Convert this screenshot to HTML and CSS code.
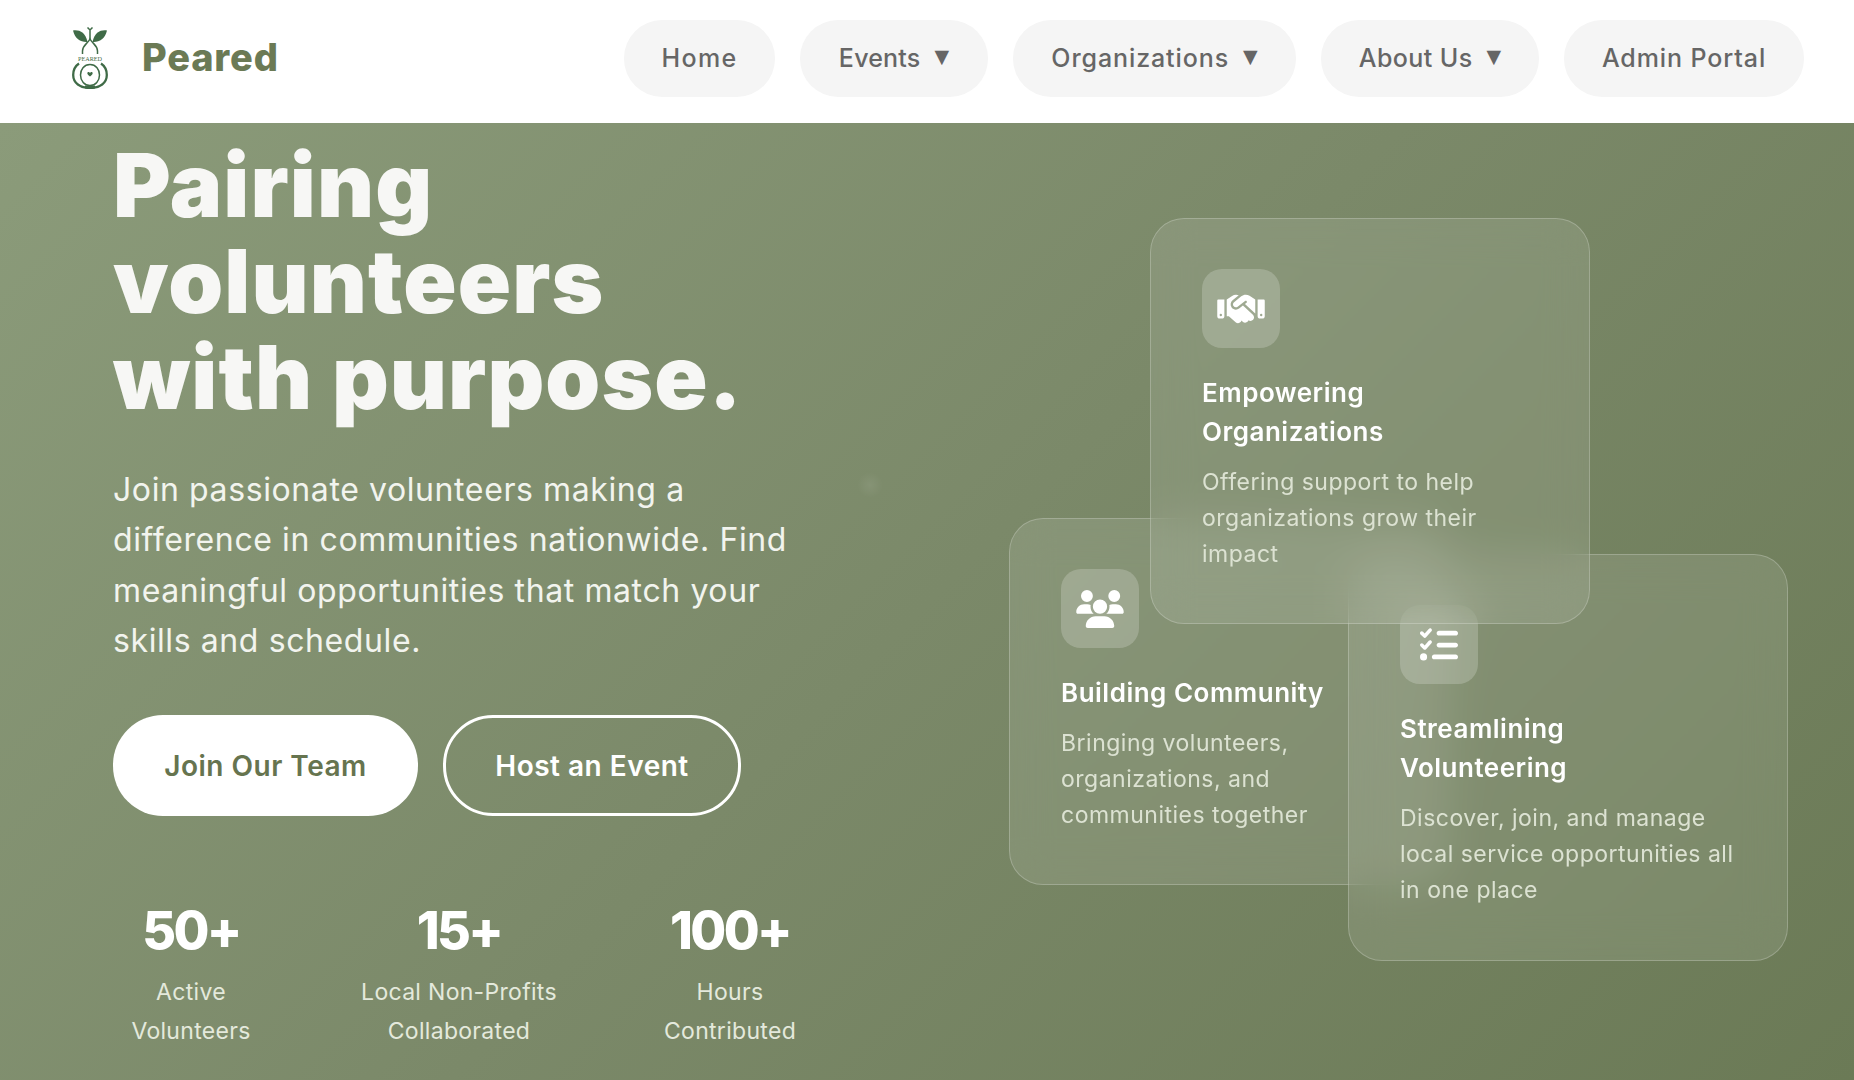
FILE: index.html
```html
<!DOCTYPE html>
<html lang="en">
<head>
<meta charset="utf-8">
<title>Peared</title>
<link rel="stylesheet" href="styles.css">
</head>
<body>
<header class="topbar">
  <a class="brand" href="#">
    <svg class="brand-logo" viewBox="0 0 36 62" aria-hidden="true">
      <path class="logo-fill" d="M1 3.500C7 2.500 13.500 5 15.500 15C9 15.500 3 12 1 3.500Z"/>
      <path class="logo-fill" d="M35 3.500C29 2.500 22.500 5 20.500 15C27 15.500 33 12 35 3.500Z"/>
      <path class="logo-line" d="M15.500 .5L18 3L20.500 .5M18 3V12"/>
      <path class="logo-line" d="M10.500 27V24C10.500 18 15.500 17 18 12C20.500 17 25.500 18 25.500 24V27"/>
      <text class="logo-word" x="18" y="33.500" text-anchor="middle">PEARED</text>
      <path class="logo-line thick" d="M7 36.500C2.500 39.500 1.200 44 1.200 48C1.200 56 8 61 18 61C28 61 34.800 56 34.800 48C34.800 44 33.500 39.500 29 36.500"/>
      <path class="logo-line" d="M18 37.500C12 37.500 8.500 42.500 8.500 48C8.500 54 12.500 58.500 18 58.500C23.500 58.500 27.500 54 27.500 48C27.500 42.500 24 37.500 18 37.500Z"/>
      <path class="logo-fill" d="M15.500 45.500C16.300 44.800 17.500 45 18 46C18.500 45 19.700 44.800 20.500 45.500C21.300 46.800 19.700 48.300 18 49.500C16.300 48.300 14.700 46.800 15.500 45.500Z"/>
      <path class="logo-fill" d="M13 58.500H23V61.500H13Z"/>
    </svg>
    <span class="brand-name">Peared</span>
  </a>
  <nav class="nav">
    <a class="nav-pill nav-home" href="#">Home</a>
    <a class="nav-pill nav-events" href="#">Events <span class="caret">▼</span></a>
    <a class="nav-pill nav-orgs" href="#">Organizations <span class="caret">▼</span></a>
    <a class="nav-pill nav-about" href="#">About Us <span class="caret">▼</span></a>
    <a class="nav-pill nav-admin" href="#">Admin Portal</a>
  </nav>
</header>

<main class="hero">
  <span class="speck"></span>
  <section class="hero-copy">
    <h1 class="hero-title">Pairing<br>volunteers<br>with purpose.</h1>
    <p class="hero-lead">Join passionate volunteers making a<br>difference in communities nationwide. Find<br>meaningful opportunities that match your<br>skills and schedule.</p>
    <div class="hero-actions">
      <a class="btn btn-solid" href="#">Join Our Team</a>
      <a class="btn btn-ghost" href="#">Host an Event</a>
    </div>
    <div class="stats">
      <div class="stat"><div class="stat-num">50+</div><div class="stat-label">Active<br>Volunteers</div></div>
      <div class="stat"><div class="stat-num">15+</div><div class="stat-label">Local Non-Profits<br>Collaborated</div></div>
      <div class="stat"><div class="stat-num">100+</div><div class="stat-label">Hours<br>Contributed</div></div>
    </div>
  </section>

  <section class="cards">
    <article class="card card-community">
      <div class="card-icon">
        <svg viewBox="0 0 640 512" class="glyph wide"><path d="M144 0a80 80 0 1 1 0 160A80 80 0 1 1 144 0zM512 0a80 80 0 1 1 0 160A80 80 0 1 1 512 0zM0 298.700C0 239.800 47.800 192 106.700 192h42.700c15.900 0 31 3.500 44.600 9.700c-1.300 7.200-1.900 14.700-1.900 22.300c0 38.200 16.800 72.500 43.300 96c-.2 0-.4 0-.7 0H21.300C9.600 320 0 310.400 0 298.700zM405.300 320c-.2 0-.4 0-.7 0c26.600-23.500 43.300-57.800 43.300-96c0-7.600-.7-15-1.900-22.300c13.600-6.300 28.700-9.700 44.600-9.700h42.700C592.200 192 640 239.800 640 298.700c0 11.800-9.600 21.300-21.300 21.300H405.300zM224 224a96 96 0 1 1 192 0 96 96 0 1 1 -192 0zM128 485.300C128 411.700 187.700 352 261.300 352H378.700C452.300 352 512 411.700 512 485.300c0 14.700-11.900 26.700-26.700 26.700H154.700c-14.700 0-26.700-11.900-26.700-26.700z"/></svg>
      </div>
      <h3 class="card-title">Building Community</h3>
      <p class="card-text">Bringing volunteers,<br>organizations, and<br>communities together</p>
    </article>
    <article class="card card-stream">
      <div class="card-icon">
        <svg viewBox="0 0 512 512" class="glyph"><path d="M152.100 38.200c9.900 8.900 10.700 24 1.800 33.900l-72 80c-4.400 4.900-10.600 7.800-17.200 7.900s-12.900-2.400-17.600-7L7 113C-2.300 103.600-2.300 88.400 7 79s24.600-9.400 33.900 0l22.100 22.100 55.100-61.200c8.900-9.900 24-10.700 33.900-1.800zm0 160c9.900 8.900 10.700 24 1.800 33.900l-72 80c-4.400 4.900-10.600 7.800-17.200 7.900s-12.900-2.400-17.600-7L7 273c-9.400-9.400-9.400-24.600 0-33.900s24.600-9.400 33.900 0l22.100 22.100 55.100-61.200c8.900-9.900 24-10.700 33.900-1.800zM224 96c0-17.700 14.300-32 32-32H480c17.700 0 32 14.300 32 32s-14.300 32-32 32H256c-17.700 0-32-14.300-32-32zm0 160c0-17.700 14.300-32 32-32H480c17.700 0 32 14.300 32 32s-14.300 32-32 32H256c-17.700 0-32-14.300-32-32zM160 416c0-17.700 14.300-32 32-32H480c17.700 0 32 14.300 32 32s-14.300 32-32 32H192c-17.700 0-32-14.300-32-32zM48 368a48 48 0 1 1 0 96 48 48 0 1 1 0-96z"/></svg>
      </div>
      <h3 class="card-title">Streamlining<br>Volunteering</h3>
      <p class="card-text">Discover, join, and manage<br>local service opportunities all<br>in one place</p>
    </article>
    <article class="card card-empower">
      <div class="card-icon">
        <svg viewBox="0 0 640 512" class="glyph wide"><path d="M323.400 85.200l-96.800 78.400c-16.100 13-19.200 36.400-7 53.100c12.900 17.800 38 21.300 55.300 7.800l99.300-77.200c7-5.400 17-4.200 22.500 2.800s4.200 17-2.800 22.500l-20.900 16.200L512 316.800V128h-.7l-3.900-2.500L434.800 79c-15.300-9.800-33.200-15-51.400-15c-21.800 0-43 7.500-60 21.200zm22.800 124.400l-51.700 40.200C263 274.400 217.300 268 193.700 235.600c-22.200-30.500-16.600-73.100 12.700-96.800l83.200-67.300c-11.600-4.900-24.100-7.400-36.800-7.400C234 64 215.700 69.600 200 80l-72 48V352h28.200l91.400 83.400c19.600 17.900 49.900 16.500 67.800-3.100c5.500-6.100 9.200-13.200 11.100-20.600l17 15.600c19.500 17.900 49.900 16.600 67.800-2.900c4.500-4.900 7.800-10.600 9.900-16.500c19.400 13 45.800 10.300 62.100-7.500c17.900-19.500 16.600-49.900-2.900-67.800l-134.200-123zM16 128c-8.800 0-16 7.200-16 16V352c0 17.700 14.300 32 32 32H64c17.700 0 32-14.300 32-32V128H16zM48 320a16 16 0 1 1 0 32 16 16 0 1 1 0-32zM544 128V352c0 17.700 14.300 32 32 32h32c17.700 0 32-14.300 32-32V144c0-8.800-7.200-16-16-16H544zm32 208a16 16 0 1 1 32 0 16 16 0 1 1 -32 0z"/></svg>
      </div>
      <h3 class="card-title">Empowering<br>Organizations</h3>
      <p class="card-text">Offering support to help<br>organizations grow their<br>impact</p>
    </article>
  </section>
</main>
</body>
</html>
```

FILE: styles.css
```css
* { box-sizing: border-box; }
html, body { margin: 0; height: 100%; overflow: hidden; }
body {
  display: flex;
  flex-direction: column;
  font-family: Inter, "Noto Sans", "Liberation Sans", sans-serif;
  background: #fff;
}
a { text-decoration: none; color: inherit; }

.topbar {
  flex: 0 0 123px;
  display: flex;
  align-items: center;
  justify-content: space-between;
  padding: 0 50px 7px 72px;
  background: #fff;
}
.brand { display: flex; align-items: center; gap: 34px; }
.brand-logo { width: 36px; height: 62px; display: block; }
.logo-fill { fill: #3f6b47; }
.logo-line { fill: none; stroke: #3f6b47; stroke-width: 1.500; }
.logo-line.thick { stroke-width: 2.300; }
.logo-word { font-family: "Liberation Serif", serif; font-size: 6.200px; fill: #3f6b47; }
.brand-name { font-size: 38px; font-weight: 800; color: #6b7a55; letter-spacing: .8px; margin-top: -2px; }

.nav { display: flex; gap: 25px; }
.nav-pill {
  display: flex;
  align-items: center;
  justify-content: center;
  gap: 14px;
  height: 77px;
  border-radius: 38px;
  background: #f5f5f5;
  color: #666;
  font-size: 25px;
  font-weight: 500;
  letter-spacing: .7px;
}
.nav-home { width: 151px; letter-spacing: 1.300px; }
.nav-events { width: 188px; letter-spacing: .2px; }
.nav-orgs { width: 283px; letter-spacing: .9px; }
.nav-about { width: 218px; letter-spacing: .4px; }
.nav-admin { width: 240px; letter-spacing: .9px; }
.caret { font-family: "DejaVu Sans", sans-serif; font-size: 19px; margin-top: -4px; letter-spacing: 0; }

.hero {
  position: relative;
  flex: 1;
  display: flex;
  min-height: 0;
  padding: 14px 66px 0 113px;
  justify-content: space-between;
  color: #fff;
  background: linear-gradient(135deg, #8b9b7a 0%, #7b8969 50%, #6b7a56 100%);
}
.speck {
  position: absolute;
  left: 857px;
  top: 349px;
  width: 26px;
  height: 26px;
  border-radius: 50%;
  background: radial-gradient(circle, rgba(255, 255, 255, .07), rgba(255, 255, 255, 0) 70%);
}
.hero-copy { width: 700px; }
.hero-title {
  margin: 0;
  font-size: 88px;
  line-height: 96px;
  font-weight: 900;
  color: #f7f7f5;
  letter-spacing: 1.100px;
}
.hero-lead {
  margin: 40px 0 0;
  font-size: 32px;
  line-height: 50.300px;
  font-weight: 400;
  letter-spacing: .6px;
  color: #f2f4ee;
}
.hero-actions { display: flex; gap: 25px; margin-top: 49px; }
.btn {
  display: flex;
  align-items: center;
  justify-content: center;
  height: 101px;
  border-radius: 50px;
  font-size: 28px;
  font-weight: 600;
  letter-spacing: .5px;
}
.btn-solid { width: 305px; background: #fff; color: #66744f; }
.btn-ghost { width: 298px; border: 3px solid #fff; color: #fff; }

.stats {
  display: grid;
  grid-template-columns: 156px 380px 162px;
  margin-top: 85px;
  text-align: center;
}
.stat-num { font-size: 52px; line-height: 60px; font-weight: 800; letter-spacing: -2.600px; }
.stat-label { margin-top: 12px; font-size: 23px; line-height: 39px; letter-spacing: .3px; color: #e4e9dc; }

.cards {
  display: grid;
  grid-template-columns: 141px 198px 242px 198px;
  grid-template-rows: 300px 36px 70px 261px 76px;
  margin-top: 81px;
  align-self: flex-start;
}
.card {
  padding: 50px 51px;
  border: 1px solid rgba(255, 255, 255, .22);
  border-radius: 34px;
  background: rgba(255, 255, 255, .1);
  -webkit-backdrop-filter: blur(20px);
  backdrop-filter: blur(20px);
}
.card-community { grid-column: 1 / 4; grid-row: 2 / 5; margin-right: 141px; }
.card-stream { grid-column: 3 / 5; grid-row: 3 / 6; }
.card-empower { grid-column: 2 / 4; grid-row: 1 / 4; }
.card-icon {
  display: flex;
  align-items: center;
  justify-content: center;
  width: 78px;
  height: 79px;
  border-radius: 20px;
  background: rgba(255, 255, 255, .2);
}
.glyph { width: 38px; height: 38px; fill: #fff; display: block; }
.glyph.wide { width: 48px; }
.card-title {
  margin: 25px 0 0;
  font-size: 26px;
  line-height: 39px;
  font-weight: 600;
  letter-spacing: .5px;
}
.card-text {
  margin: 13px 0 0;
  font-size: 23px;
  line-height: 36.200px;
  letter-spacing: .5px;
  color: #dce2d2;
}
```
